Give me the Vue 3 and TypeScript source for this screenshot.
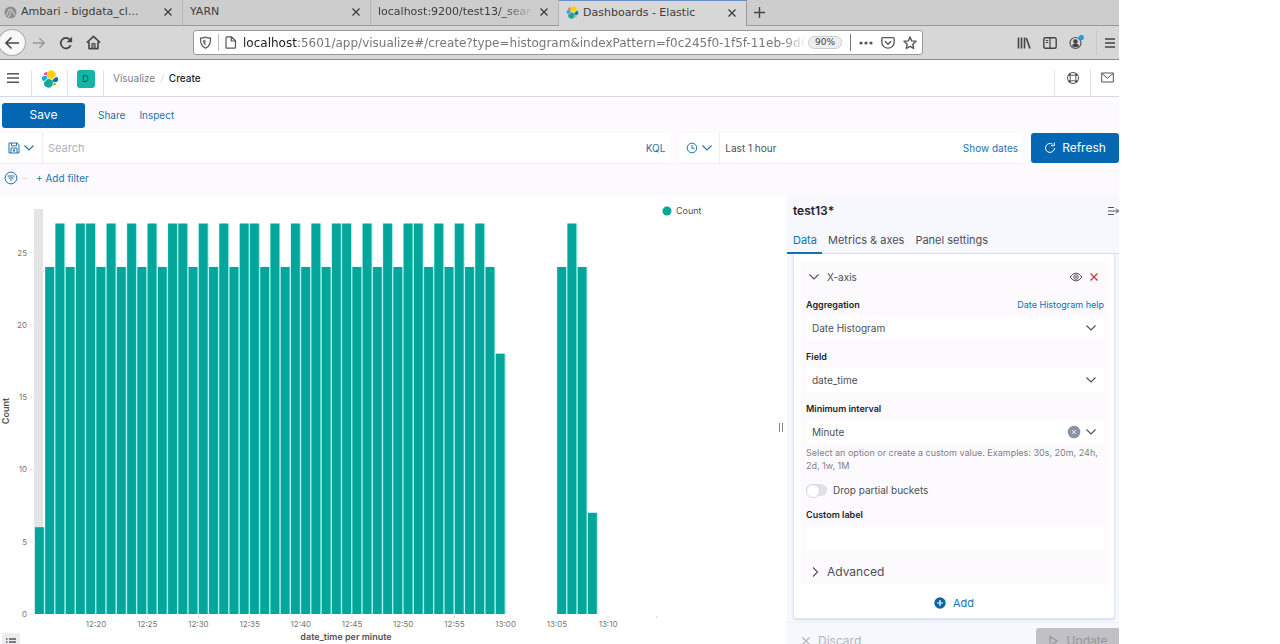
<script setup lang="ts">
import { ref } from 'vue'

interface BrowserTab { title: string; icon: 'ambari' | 'elastic' | null; active?: boolean; faded?: boolean }

const browserTabs: BrowserTab[] = [
  { title: 'Ambari - bigdata_cl...', icon: 'ambari' },
  { title: 'YARN', icon: null },
  { title: 'localhost:9200/test13/_sear', icon: null, faded: true },
  { title: 'Dashboards - Elastic', icon: 'elastic', active: true },
]

const counts: number[] = [
  6, 24, 27, 24, 27, 27, 24, 27, 24, 27, 24, 27, 24, 27, 27, 24, 27, 24, 27, 24,
  27, 27, 24, 27, 24, 27, 24, 27, 24, 27, 27, 24, 27, 24, 27, 24, 27, 27, 24, 27,
  24, 27, 24, 27, 24, 18, 0, 0, 0, 0, 0, 24, 27, 24, 7,
]
const plot = { left: 34.6, bottom: 418, unit: 14.46, pitch: 10.24, bar: 8.8 }
const bars = counts
  .map((count, i) => ({ x: plot.left + i * plot.pitch, y: plot.bottom - count * plot.unit, h: count * plot.unit }))
  .filter((b) => b.h > 0)
const yTicks = [0, 5, 10, 15, 20, 25].map((v) => ({ v, y: plot.bottom - v * plot.unit }))
const xTicks = ['12:20', '12:25', '12:30', '12:35', '12:40', '12:45', '12:50', '12:55', '13:00', '13:05', '13:10']
  .map((t, i) => ({ t, x: plot.left + (6 + i * 5) * plot.pitch }))

const panelTabs = ['Data', 'Metrics & axes', 'Panel settings']
const activeTab = ref('Data')
const search = ref('')
const aggregation = ref('Date Histogram')
const field = ref('date_time')
const interval = ref('Minute')
const dropPartial = ref(false)
const customLabel = ref('')
</script>

<template>
  <div class="window">
    <svg class="defs" aria-hidden="true">
      <symbol id="elastic" viewBox="0 0 32 32">
        <path fill="#fdd009" d="M12 13.5l7 3.2 7-6.2a7.8 7.8 0 0 0-14.3-5.9L10.500 10.700z" />
        <path fill="#17a79a" d="M5.600 21.400a7.900 7.900 0 0 0 14.500 6l1.200-6.100-1.600-3-7-3.200z" />
        <path fill="#ef5098" d="M5.500 8.800l4.800 1.100 1-5.400A3.800 3.800 0 0 0 5.500 8.800z" />
        <path fill="#17a8e0" d="M5.100 10a5.300 5.300 0 0 0-.2 10l6.700-6-1.200-2.700z" />
        <path fill="#93c83e" d="M20.800 27.300a3.800 3.800 0 0 0 5.800-4.200l-4.800-1.100z" />
        <path fill="#0779a1" d="M21.600 20.700l5.300 1.200a5.300 5.300 0 0 0 .2-10l-6.900 6z" />
      </symbol>
      <symbol id="down" viewBox="0 0 12 12"><path d="M1.500 3.500L6 8l4.500-4.500" fill="none" stroke="currentColor" stroke-width="1.100" /></symbol>
      <symbol id="cross" viewBox="0 0 12 12"><path d="M2.500 2.500l7 7M9.500 2.500l-7 7" fill="none" stroke="currentColor" stroke-width="1.300" /></symbol>
    </svg>

    <div class="tabstrip">
      <div v-for="tab in browserTabs" :key="tab.title" class="btab" :class="{ active: tab.active }">
        <svg v-if="tab.icon === 'elastic'" class="i13"><use href="#elastic" /></svg>
        <svg v-else-if="tab.icon === 'ambari'" class="i13" viewBox="0 0 13 13">
          <circle cx="6.500" cy="6.500" r="6" fill="#8d8d8d" />
          <path d="M1.500 10C4 9 3.500 4 6 3.500S9 8 11.500 9.500M4 11.500C7 10 6 7 7 5.500" fill="none" stroke="#c4c4c4" stroke-width="1.300" />
        </svg>
        <button class="btitle" :class="{ faded: tab.faded }">{{ tab.title }}</button>
        <button class="close" aria-label="Close tab"><svg class="i12"><use href="#cross" /></svg></button>
      </div>
      <button class="newtab" aria-label="New tab">
        <svg class="i13" viewBox="0 0 13 13"><path d="M6.500 1v11M1 6.500h11" stroke="#444" stroke-width="1.400" /></svg>
      </button>
    </div>

    <div class="toolbar">
      <div class="nav">
        <button class="back" aria-label="Back">
          <svg class="i16" viewBox="0 0 16 16"><path d="M15 8H2M7.500 2.500L2 8l5.500 5.500" fill="none" stroke="#444" stroke-width="1.600" /></svg>
        </button>
        <button aria-label="Forward">
          <svg class="i14" viewBox="0 0 16 16"><path d="M1 8h13M8.500 2.500L14 8l-5.500 5.500" fill="none" stroke="#999" stroke-width="1.600" /></svg>
        </button>
        <button aria-label="Reload">
          <svg class="i14" viewBox="0 0 16 16"><path d="M13.500 10.500a6 6 0 1 1-1-6.300" fill="none" stroke="#444" stroke-width="1.900" /><path d="M15 .8v6.400H8.600z" fill="#444" /></svg>
        </button>
        <button aria-label="Home">
          <svg class="i15" viewBox="0 0 16 16"><path d="M1 8.200L8 1.500l7 6.700M3.200 7.500v7h9.600v-7" fill="none" stroke="#444" stroke-width="1.700" stroke-linejoin="round" /><path d="M6.300 14V9h3.400v5" fill="#888" stroke="#444" /></svg>
        </button>
      </div>
      <div class="urlbar">
        <svg class="i13" viewBox="0 0 13 13"><path d="M6.500 1C8 2 9.500 2.200 11.500 2.200 11.700 7 10.500 10.500 6.500 12.300 2.500 10.500 1.300 7 1.500 2.200 3.500 2.200 5 2 6.500 1z" fill="none" stroke="#555" stroke-width="1.200" /><path d="M6.500 3.500v6.300C4.500 8.500 4 6.500 4 4.200z" fill="#777" /></svg>
        <span class="urlsep"></span>
        <svg class="i13" viewBox="0 0 13 13"><path d="M2 1.700Q2 .8 3 .8h4.500L11.500 4.800v6.500q0 .9-1 .9H3q-1 0-1-.9zM7.300.8V5h4.200" fill="none" stroke="#555" stroke-width="1.200" /></svg>
        <a class="url" href="#"><b>localhost</b>:5601/app/visualize#/create?type=histogram&amp;indexPattern=f0c245f0-1f5f-11eb-9d6</a>
        <button class="zoomlevel">90%</button>
        <span class="urlsep dark"></span>
        <button aria-label="Page actions"><svg class="i14" viewBox="0 0 14 14"><g fill="#555"><circle cx="2" cy="7" r="1.600" /><circle cx="7" cy="7" r="1.600" /><circle cx="12" cy="7" r="1.600" /></g></svg></button>
        <button aria-label="Pocket"><svg class="i14" viewBox="0 0 14 14"><path d="M1.800 1.700h10.400q1 0 1 1V6a6.200 6.200 0 0 1-12.400 0V2.700q0-1 1-1z" fill="none" stroke="#555" stroke-width="1.300" /><path d="M4 5.300l3 3 3-3" fill="none" stroke="#555" stroke-width="1.500" /></svg></button>
        <button aria-label="Bookmark"><svg class="i14" viewBox="0 0 14 14"><path d="M7 1l1.700 3.900 4.300.4-3.200 2.900.9 4.300L7 10.300l-3.700 2.200.9-4.300L1 5.300l4.300-.4z" fill="none" stroke="#555" stroke-width="1.400" stroke-linejoin="round" /></svg></button>
      </div>
      <div class="tools">
        <button aria-label="Library"><svg class="i14" viewBox="0 0 14 14"><path d="M1.500 1.500v11M4.500 1.500v11M7.500 1.500v11M9.300 2l3.700 10.500" stroke="#444" stroke-width="1.600" /></svg></button>
        <button aria-label="Sidebars"><svg class="i14" viewBox="0 0 14 14"><rect x=".8" y="1.800" width="12.400" height="10.400" rx="1.500" fill="none" stroke="#444" stroke-width="1.400" /><path d="M7 2v10M2.700 4.500h2.500M2.700 6.500h2.500" stroke="#444" stroke-width="1.200" /></svg></button>
        <button aria-label="Account"><svg class="i15" viewBox="0 0 15 15"><circle cx="6.500" cy="8" r="5.500" fill="none" stroke="#555" stroke-width="1.200" /><circle cx="6.500" cy="6.500" r="2.200" fill="#444" /><path d="M3 11q.5-2.500 3.500-2.500T10 11q-3.500 2.500-7 0z" fill="#444" /><circle cx="12.300" cy="2.500" r="2.600" fill="#1a9fe0" /></svg></button>
        <button class="burger" aria-label="Menu"><svg class="i12" viewBox="0 0 12 12"><path d="M1 2h10M1 6h10M1 10h10" stroke="#444" stroke-width="1.700" /></svg></button>
      </div>
    </div>

    <header class="kheader">
      <button class="hcell first" aria-label="Toggle navigation"><svg class="i12" viewBox="0 0 12 12"><path d="M0 1.800h12M0 6h12M0 10.200h12" stroke="#555" stroke-width="1.600" /></svg></button>
      <a class="hcell" href="#" aria-label="Home"><svg class="i18"><use href="#elastic" /></svg></a>
      <button class="hcell"><span class="space">D</span></button>
      <nav class="crumbs"><a href="#">Visualize</a><i>/</i><strong>Create</strong></nav>
      <button class="hcell help" aria-label="Help"><svg class="i14" viewBox="0 0 14 14"><circle cx="7" cy="7" r="5.500" fill="none" stroke="#555" /><rect x="4.200" y="4.200" width="5.600" height="5.600" rx="1.500" fill="none" stroke="#555" /><path d="M2.800 4.500l1.700-1.700M9.500 2.800l1.700 1.700M11.200 9.500l-1.700 1.700M4.500 11.200L2.800 9.500" stroke="#444" stroke-width="2" /></svg></button>
      <button class="hcell mail" aria-label="Newsfeed"><svg class="i13" viewBox="0 0 13 13"><path d="M.7 2h11.600v9H.7zM.7 2.300l5.800 5 5.800-5" fill="none" stroke="#555" /></svg></button>
    </header>

    <div class="topmenu">
      <button class="primary save">Save</button>
      <a href="#">Share</a>
      <a href="#">Inspect</a>
    </div>

    <div class="querybar">
      <div class="searchbox">
        <button class="pick saved" aria-label="Saved queries">
          <svg class="i12" viewBox="0 0 12 12"><path d="M1 1h8.300L11 2.700V11H1zM3.500 1v2.800h5V1M3 11V6h6v5M6 7v3M5 8.500h2" fill="none" stroke="currentColor" /></svg>
          <svg class="i12"><use href="#down" /></svg>
        </button>
        <input v-model="search" aria-label="Search" placeholder="Search" />
        <button class="link">KQL</button>
      </div>
      <div class="datebox">
        <button class="pick" aria-label="Quick time ranges">
          <svg class="i12" viewBox="0 0 12 12"><circle cx="6" cy="6" r="4.800" fill="none" stroke="currentColor" /><path d="M6 3v3.300h2.500" fill="none" stroke="currentColor" /></svg>
          <svg class="i12"><use href="#down" /></svg>
        </button>
        <button class="range">Last 1 hour</button>
        <button class="link">Show dates</button>
      </div>
      <button class="primary refresh">
        <svg class="i12" viewBox="0 0 12 12"><path d="M10.500 6A4.500 4.500 0 1 1 8.500 2.200M7 3.700h3.300V.5" fill="none" stroke="#fff" /></svg>
        Refresh
      </button>
    </div>

    <div class="filterbar">
      <button aria-label="Filter options"><svg class="i14" viewBox="0 0 14 14"><circle cx="7" cy="7" r="5.900" fill="none" stroke="currentColor" /><path d="M3.500 5h7M4.500 7h5M5.800 9h2.400" stroke="currentColor" /></svg></button>
      <span class="dash"></span>
      <button>+ Add filter</button>
    </div>

    <main class="editor">
      <section class="vis">
        <svg class="chart" viewBox="0 0 786 448" role="img" aria-label="Count by date_time per minute">
          <rect :x="plot.left - 0.6" y="13" width="9" height="405" fill="#e4e4e4" />
          <rect v-for="b in bars" :key="b.x" :x="b.x" :y="b.y" :width="plot.pitch" :height="b.h" fill="#9ff0e8" />
          <rect v-for="b in bars" :key="'b' + b.x" :x="b.x + 0.4" :y="b.y" :width="plot.bar" :height="b.h" fill="#04a59a" />
          <g v-for="t in yTicks" :key="t.v">
            <text class="tick" x="27" :y="t.y + 3" text-anchor="end">{{ t.v }}</text>
            <path :d="`M30 ${t.y}h3`" stroke="#ddd" />
          </g>
          <g v-for="t in xTicks" :key="t.t">
            <path :d="`M${t.x} 420v2`" stroke="#ddd" />
            <text class="tick" :x="t.x" y="431" text-anchor="middle">{{ t.t }}</text>
          </g>
          <path d="M656.500 420v2" stroke="#ddd" />
          <text class="axis" x="346" y="444" text-anchor="middle">date_time per minute</text>
          <text class="axis" transform="translate(9 215) rotate(-90)" text-anchor="middle">Count</text>
          <circle cx="667" cy="15" r="4.500" fill="#04a59a" />
          <text class="legend" x="676" y="18">Count</text>
          <path d="M779.500 227v9M782.500 227v9" stroke="#888" />
        </svg>
        <button class="legendtoggle" aria-label="Toggle legend"><svg class="i12" viewBox="0 0 12 12"><path d="M1 3h1.500M4 3h7M1 6h1.500M4 6h7M1 9h1.500M4 9h7" stroke="#555" stroke-width="1.300" /></svg></button>
      </section>

      <aside class="panel">
        <div class="phead">
          <h2>test13*</h2>
          <button aria-label="Collapse panel"><svg class="i12" viewBox="0 0 12 12"><path d="M1 2.500h6M1 6h11M1 9.500h6M9 3.500L11.500 6 9 8.500" fill="none" stroke="#555" /></svg></button>
        </div>
        <div class="ptabs" role="tablist">
          <button v-for="t in panelTabs" :key="t" role="tab" :class="{ on: t === activeTab }" @click="activeTab = t">{{ t }}</button>
        </div>
        <div class="card">
          <div class="bucket">
            <div class="axisrow">
              <button class="axisname"><svg class="i12"><use href="#down" /></svg>X-axis</button>
              <button aria-label="Disable aggregation"><svg class="i14" viewBox="0 0 14 14"><path d="M1 7q6-8 12 0-6 8-12 0z" fill="none" stroke="#555" /><circle cx="7" cy="7" r="2.300" fill="none" stroke="#555" /><circle cx="7" cy="7" r=".9" fill="#555" /></svg></button>
              <button class="remove" aria-label="Remove X-axis"><svg class="i12"><use href="#cross" /></svg></button>
            </div>
            <div class="form">
              <div class="row">
                <div class="labelrow"><label for="agg">Aggregation</label><a href="#">Date Histogram help</a></div>
                <div class="select"><select id="agg" v-model="aggregation"><option>Date Histogram</option></select><svg class="i12"><use href="#down" /></svg></div>
              </div>
              <div class="row">
                <div class="labelrow"><label for="field">Field</label></div>
                <div class="select"><select id="field" v-model="field"><option>date_time</option></select><svg class="i12"><use href="#down" /></svg></div>
              </div>
              <div class="row">
                <div class="labelrow"><label for="interval">Minimum interval</label></div>
                <div class="select">
                  <select id="interval" v-model="interval"><option>Minute</option></select>
                  <button class="clear" aria-label="Clear input"><svg class="i14" viewBox="0 0 14 14"><circle cx="7" cy="7" r="6.300" fill="#8d93a6" /><path d="M5 5l4 4M9 5l-4 4" stroke="#e8e8f4" /></svg></button>
                  <svg class="i12"><use href="#down" /></svg>
                </div>
                <p>Select an option or create a custom value. Examples: 30s, 20m, 24h, 2d, 1w, 1M</p>
              </div>
              <label class="switch"><input v-model="dropPartial" type="checkbox" role="switch" />Drop partial buckets</label>
              <div class="row">
                <div class="labelrow"><label for="custom">Custom label</label></div>
                <input id="custom" v-model="customLabel" class="text" type="text" />
              </div>
              <button class="advanced"><svg class="i12" viewBox="0 0 12 12"><path d="M4 1.500L8.500 6 4 10.500" fill="none" stroke="#555" stroke-width="1.200" /></svg>Advanced</button>
            </div>
          </div>
          <button class="add"><svg class="i12" viewBox="0 0 12 12"><circle cx="6" cy="6" r="5.700" fill="#0b64a8" /><path d="M6 3v6M3 6h6" stroke="#fff" stroke-width="1.200" /></svg>Add</button>
        </div>
        <div class="pfoot">
          <button class="discard"><svg class="i12"><use href="#cross" /></svg>Discard</button>
          <button class="update"><svg class="i12" viewBox="0 0 12 12"><path d="M3 1.500L10 6l-7 4.500z" fill="none" stroke="currentColor" stroke-width="1.200" /></svg>Update</button>
        </div>
      </aside>
    </main>
  </div>
</template>

<style>
body { background: #fff; }
</style>

<style scoped>
* { box-sizing: border-box; }
.window { display: flex; flex-direction: column; height: 100vh; margin-right: 161px; overflow: hidden; background: #fdfafe; color: #4c4f58; font: 10px/16px Inter, "Liberation Sans", sans-serif; }
.defs { position: absolute; width: 0; height: 0; }
button { display: flex; align-items: center; flex: none; margin: 0; padding: 0; border: 0; background: none; color: inherit; font: inherit; }
a { color: inherit; text-decoration: none; }
svg { display: block; flex: none; }
.i12 { width: 12px; height: 12px; }
.i13 { width: 13px; height: 13px; }
.i14 { width: 14px; height: 14px; }
.i15 { width: 15px; height: 15px; }
.i16 { width: 16px; height: 16px; }
.i18 { width: 18px; height: 18px; }

.tabstrip { display: flex; flex: none; height: 26px; background: #cdcdcd; border-bottom: 1px solid #999; font: 11px/16px "DejaVu Sans", sans-serif; color: #3c3c3c; }
.btab { display: flex; align-items: center; gap: 4px; width: 188px; height: 25px; padding: 0 8px 1px 7px; border-right: 1px solid #b4b4b4; }
.btab:first-child { width: 183px; padding-left: 4px; }
.btab.active { height: 26px; padding-bottom: 2px; background: #d7d7d7; border-top: 1px solid #6b8fc4; border-right-color: #999; }
.btitle { flex: 1; min-width: 0; overflow: hidden; white-space: nowrap; }
.faded { mask-image: linear-gradient(to right, #000 80%, transparent); }
.newtab { padding: 0 6px 1px; }

.toolbar { display: flex; flex: none; align-items: center; height: 34px; background: #d7d7d7; border-bottom: 1px solid #8e8e8e; }
.nav { display: flex; align-items: center; gap: 13px; width: 193px; }
.back { justify-content: center; width: 28px; height: 27px; margin: 0 -7px 0 -2px; border: 1px solid #aaa; border-radius: 50%; background: #f8f8f8; }
.urlbar { display: flex; align-items: center; gap: 8px; flex: 1; min-width: 0; max-width: 730px; height: 25px; padding: 0 5px; border: 1px solid #999; border-radius: 3px; background: #fff; color: #777; font: 12px/16px "DejaVu Sans", sans-serif; }
.urlbar .i13:first-child { margin-right: -2px; }
.urlsep { width: 1px; height: 17px; margin-right: -3px; background: #bbb; }
.urlsep.dark { margin: 0; background: #777; }
.url { flex: 1; min-width: 0; margin: 0 -6px 0 -2px; overflow: hidden; white-space: nowrap; mask-image: linear-gradient(to right, #000 96%, transparent); }
.url b { color: #222; font-weight: 400; }
.zoomlevel { padding: 0 6px; border: 1px solid #ccc; border-radius: 7px; background: #eee; color: #444; font-size: 9px; line-height: 11px; }
.tools { display: flex; align-items: center; justify-content: flex-end; gap: 12px; width: 196px; padding-right: 3px; }
.burger { height: 25px; padding-left: 7px; border-left: 1px solid #c8c8c8; }

.kheader { display: flex; flex: none; align-items: flex-end; height: 37px; background: #fff; border-bottom: 1px solid #d3dae6; }
.hcell { display: flex; justify-content: center; align-items: flex-start; width: 36px; height: 26px; border-right: 1px solid #e3e4ea; }
.hcell.first { width: 32px; padding: 2px 5px 0 0; }
.space { width: 18px; height: 18px; border-radius: 3px; background: #12b5a6; color: #0b4a50; font-size: 9px; line-height: 18px; text-align: center; }
.crumbs { display: flex; flex: 1; gap: 5px; height: 26px; padding-left: 9px; }
.crumbs a { color: #7c8088; }
.crumbs i { color: #ddd; }
.crumbs strong { color: #22242c; font-weight: 500; }
.kheader .help { width: 37px; border-left: 1px solid #e3e4ea; padding-top: 1px; }
.mail { width: 28px; padding: 1px 0 0 5px; border: 0; }

.topmenu { display: flex; flex: none; align-items: center; gap: 14px; height: 36px; padding-left: 2px; color: #2272ae; }
.primary { justify-content: center; border-radius: 3px; background: #0367b4; color: #fff; font-size: 12px; }
.save { width: 83px; height: 25px; margin-right: -1px; }

.querybar { display: flex; flex: none; gap: 8px; height: 31px; color: #2272ae; }
.searchbox, .datebox { display: flex; align-items: center; height: 31px; background: #fff; border-bottom: 1px solid #f0eef4; }
.searchbox { flex: 1 1 672px; padding-right: 6px; }
.datebox { flex: 0 1 344px; padding-right: 5px; }
.pick { justify-content: center; gap: 3px; width: 41px; height: 30px; border-right: 1px solid #ecedf2; }
.saved { width: 43px; }
.searchbox input { flex: 1; min-width: 0; padding: 0 5px; border: 0; background: none; outline: 0; font: inherit; font-size: 11px; }
.searchbox input::placeholder { color: #aeb1ba; }
.range { flex: 1; padding-left: 5px; color: #4c4f58; }
.refresh { gap: 6px; width: 88px; height: 30px; }
.filterbar { display: flex; flex: none; align-items: center; height: 32px; padding: 0 0 4px 4px; color: #2272ae; }
.dash { width: 6px; height: 1px; margin: 0 8px 0 4px; background: #ddd; }

.editor { display: flex; flex: 1; align-items: stretch; }
.vis { position: relative; flex: 1; min-width: 0; background: #fff; border-right: 1px solid #fafbfd; }
.chart { width: 100%; overflow: visible; }
.tick { fill: #777; font-size: 8px; }
.axis { fill: #555; font-size: 9px; font-weight: 600; }
.legend { fill: #4c4f58; font-size: 9px; }
.legendtoggle { position: absolute; left: 2px; top: 437px; justify-content: center; width: 18px; height: 18px; border-radius: 2px; background: #ececef; }

.panel { display: flex; flex-direction: column; flex: none; width: 332px; background: #f6f8fe; }
.phead { display: flex; justify-content: space-between; align-items: center; height: 30px; padding-left: 6px; }
h2 { margin: 0; color: #1f222b; font-size: 12px; line-height: 16px; font-weight: 600; }
.ptabs { display: flex; height: 28px; border-bottom: 1px solid #d8deea; font-size: 11px; }
.ptabs button { height: 28px; padding: 2px 5px 0 6px; border-bottom: 2px solid transparent; }
.ptabs .on { border-color: #0871b8; color: #0871b8; }
.card { margin: 0 4px 0 6px; padding: 8px 7px 0; height: 365px; border: 1px solid #dfe4ee; border-top: 0; border-radius: 0 0 3px 3px; background: #fff; box-shadow: 0 1px 2px #d3dae6; }
.bucket { background: #fdfafe; height: 322px; }
.axisrow { display: flex; align-items: center; gap: 5px; height: 30px; padding: 0 7px; }
.axisname { flex: 1; gap: 7px; }
.remove { color: #c8383a; }
.form { padding: 6px 3px 0 5px; }
.row { margin-bottom: 10px; }
.labelrow { display: flex; justify-content: space-between; height: 14px; margin-bottom: 4px; font-size: 9px; line-height: 14px; }
.labelrow label { color: #22242c; font-weight: 600; }
.labelrow a { color: #0871b8; }
.select { display: flex; align-items: center; gap: 4px; height: 24px; padding-right: 7px; background: #fff; }
.select select { flex: 1; min-width: 0; height: 24px; padding: 0 6px; border: 0; appearance: none; background: none; color: inherit; font: inherit; }
.row p { margin: 2px 0 0; color: #7c8088; font-size: 9px; line-height: 13px; }
.switch { display: flex; align-items: center; gap: 6px; height: 16px; margin-bottom: 10px; }
.switch input { display: flex; appearance: none; width: 21px; height: 12px; margin: 0; border-radius: 6px; background: #dfe1e6; }
.switch input::before { content: ""; width: 12px; height: 12px; border: 1px solid #d3d5dc; border-radius: 50%; background: #fff; }
.text { display: block; width: 100%; height: 24px; border: 0; background: #fff; font: inherit; }
.advanced { gap: 6px; height: 24px; padding-left: 3px; font-size: 12px; }
.add { gap: 7px; height: 38px; margin: 0 auto; color: #2272ae; font-size: 11px; }
.pfoot { display: flex; justify-content: space-between; margin-top: 3px; padding: 5px 0 6px 13px; color: #b1b4bd; font-size: 12px; border-top: 1px solid #eceff6; }
.discard { gap: 6px; height: 25px; }
.update { justify-content: center; gap: 7px; width: 83px; height: 25px; border-radius: 3px 0 0 3px; background: #c1c1c5; color: #94969e; }
</style>
